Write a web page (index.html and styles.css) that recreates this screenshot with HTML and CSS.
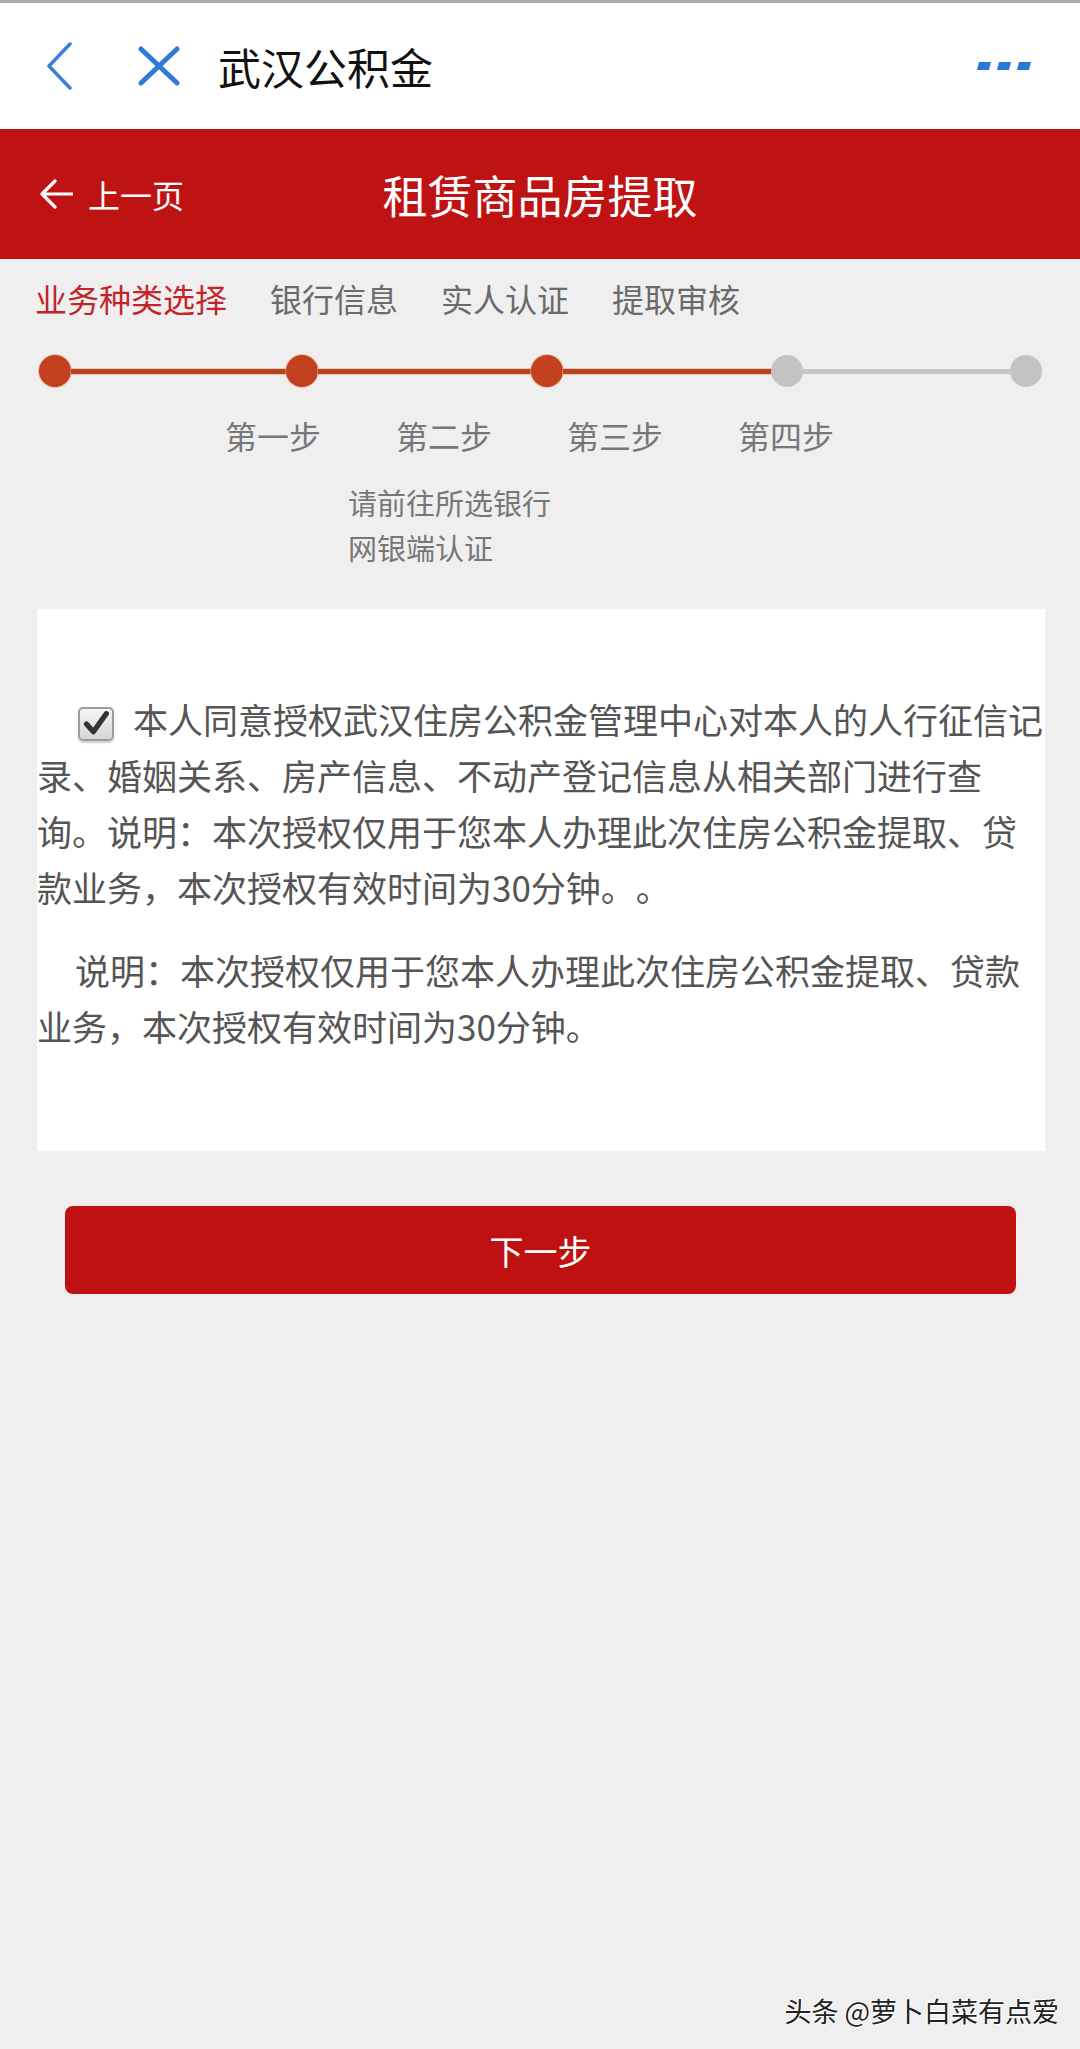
FILE: index.html
```html
<!DOCTYPE html>
<html lang="zh-CN">
<head>
<meta charset="utf-8">
<title>武汉公积金</title>
<link rel="stylesheet" href="styles.css">
</head>
<body>
<div class="page">
  <header class="nav">
    <svg class="nav-back" viewBox="0 0 28 48" width="28" height="48"><polyline points="25,2 4,24 25,46" fill="none" stroke="#3a80d6" stroke-width="3.5" stroke-linejoin="round" stroke-linecap="round"/></svg>
    <svg class="nav-close" viewBox="0 0 44 40" width="44" height="40"><path d="M4 3 Q22 20 40 37 M40 3 Q22 20 4 37" fill="none" stroke="#2f7ad8" stroke-width="5" stroke-linecap="round"/></svg>
    <h1 class="nav-title">武汉公积金</h1>
    <svg class="nav-more" viewBox="0 0 56 10" width="56" height="10"><polygon points="2,1 14,1 12,9 0,9" fill="#2a78d8"/><polygon points="22,1 34,1 32,9 20,9" fill="#2a78d8"/><polygon points="42,1 54,1 52,9 40,9" fill="#2a78d8"/></svg>
  </header>

  <div class="bar">
    <a class="bar-back">
      <svg viewBox="0 0 34 30" width="34" height="30"><path d="M16 2 L3 15 L16 28 M3 15 L33 15" fill="none" stroke="#ffffff" stroke-width="3.2" stroke-linecap="round" stroke-linejoin="round"/></svg>
      <span>上一页</span>
    </a>
    <h2 class="bar-title">租赁商品房提取</h2>
    <span class="bar-spacer"></span>
  </div>

  <nav class="tabs">
    <span class="tab tab-active">业务种类选择</span>
    <span class="tab">银行信息</span>
    <span class="tab">实人认证</span>
    <span class="tab">提取审核</span>
  </nav>

  <div class="progress">
    <span class="dot dot-on"></span>
    <span class="seg seg-on seg-a"></span>
    <span class="dot dot-on"></span>
    <span class="seg seg-on seg-b"></span>
    <span class="dot dot-on"></span>
    <span class="seg seg-on seg-c"></span>
    <span class="dot"></span>
    <span class="seg seg-d"></span>
    <span class="dot"></span>
  </div>

  <div class="steps">
    <span class="step">第一步</span>
    <span class="step">第二步</span>
    <span class="step">第三步</span>
    <span class="step">第四步</span>
  </div>

  <p class="hint">请前往所选银行<br>网银端认证</p>

  <section class="card">
    <p class="agree"><span class="check"><svg viewBox="0 0 30 30" width="26" height="26"><path d="M4 15 L12 24 L27 3" fill="none" stroke="#333333" stroke-width="6" stroke-linecap="round" stroke-linejoin="round"/></svg></span>本人同意授权武汉住房公积金管理中心对本人的人行征信记录、婚姻关系、房产信息、不动产登记信息从相关部门进行查询。说明：本次授权仅用于您本人办理此次住房公积金提取、贷款业务，本次授权有效时间为30分钟。。</p>
    <p class="note">说明：本次授权仅用于您本人办理此次住房公积金提取、贷款业务，本次授权有效时间为30分钟。</p>
  </section>

  <button class="next" type="button">下一步</button>

  <div class="watermark">头条 @萝卜白菜有点爱</div>
</div>
</body>
</html>
```

FILE: styles.css
```css
* {
  box-sizing: border-box;
}

html, body {
  margin: 0;
  padding: 0;
}

body {
  background: #efefef;
  font-family: "Noto Sans CJK SC", "Noto Sans", sans-serif;
  text-spacing-trim: space-all;
}

.page {
  position: relative;
  min-height: 2049px;
  overflow: hidden;
}

/* top app nav */
.nav {
  height: 129px;
  background: #ffffff;
  border-top: 3px solid #ababab;
  display: flex;
  align-items: center;
}

.nav-back {
  margin-left: 45px;
  flex: none;
}

.nav-close {
  margin-left: 64px;
  flex: none;
}

.nav-title {
  margin: 0 0 0 37px;
  font-size: 43px;
  font-weight: 400;
  color: #111111;
  line-height: 1;
}

.nav-more {
  margin-left: auto;
  margin-right: 47px;
  flex: none;
}

/* red header */
.bar {
  height: 130px;
  background: #bf1313;
  display: grid;
  grid-template-columns: 1fr auto 1fr;
  align-items: center;
  color: #ffffff;
}

.bar-back {
  display: flex;
  align-items: center;
  gap: 15px;
  padding-left: 39px;
  font-size: 32px;
  line-height: 1;
}

.bar-title {
  margin: 0;
  font-size: 45px;
  font-weight: 400;
  line-height: 1;
}

/* tabs */
.tabs {
  display: flex;
  gap: 43px;
  padding: 19px 0 0 35px;
}

.tab {
  font-size: 32px;
  line-height: 40px;
  color: #6a6a6a;
}

.tab-active {
  color: #c3242a;
}

/* progress */
.progress {
  display: flex;
  align-items: center;
  margin: 37px 38px 0 39px;
}

.dot {
  flex: none;
  width: 32px;
  height: 32px;
  border-radius: 50%;
  background: #c3c3c3;
}

.dot-on {
  background: #c2401e;
  box-shadow: 0 0 0 1px rgba(240, 160, 130, 0.6);
}

.seg {
  height: 5px;
  background: #c6c6c6;
}

.seg-a { flex: 215 1 0; }
.seg-b { flex: 213 1 0; }
.seg-c { flex: 208 1 0; }
.seg-d { flex: 207 1 0; }

.seg-on {
  background: #b9421f;
  box-shadow: 0 0 0 1px rgba(240, 160, 130, 0.5);
}

/* step labels */
.steps {
  display: flex;
  gap: 75px;
  padding-left: 225px;
  margin-top: 28px;
}

.step {
  font-size: 32px;
  line-height: 40px;
  color: #777777;
}

.hint {
  margin: 25px 0 0 348px;
  font-size: 29px;
  line-height: 45px;
  color: #777777;
}

/* card */
.card {
  background: #ffffff;
  margin: 39px 35px 0 37px;
  padding: 82px 0 97px 0;
  color: #555555;
  font-size: 35px;
  line-height: 56px;
}

.card p {
  margin: 0;
}

.agree {
  text-indent: 41px;
}

.check {
  display: inline-flex;
  align-items: center;
  justify-content: center;
  width: 36px;
  height: 34px;
  margin-right: 19px;
  vertical-align: -3px;
  text-indent: 0;
  border: 2px solid #9c9c9c;
  border-radius: 5px;
  background: linear-gradient(#f6f6f6, #d6d6d6);
  box-shadow: 0 2px 2px rgba(0, 0, 0, 0.2);
}

.note {
  margin-top: 27px !important;
  text-indent: 38px;
}

/* button */
.next {
  display: block;
  width: calc(100% - 129px);
  height: 88px;
  margin: 55px 64px 0 65px;
  border: 0;
  border-radius: 8px;
  background: #bf1111;
  color: #ffffff;
  font-family: "Noto Sans CJK SC", "Noto Sans", sans-serif;
  font-size: 34px;
}

/* watermark overlay */
.watermark {
  position: absolute;
  right: 21px;
  bottom: 23px;
  font-size: 27px;
  line-height: 30px;
  color: #222222;
  text-shadow: 1px 1px 0 #ffffff, -1px -1px 0 #ffffff;
}
```
